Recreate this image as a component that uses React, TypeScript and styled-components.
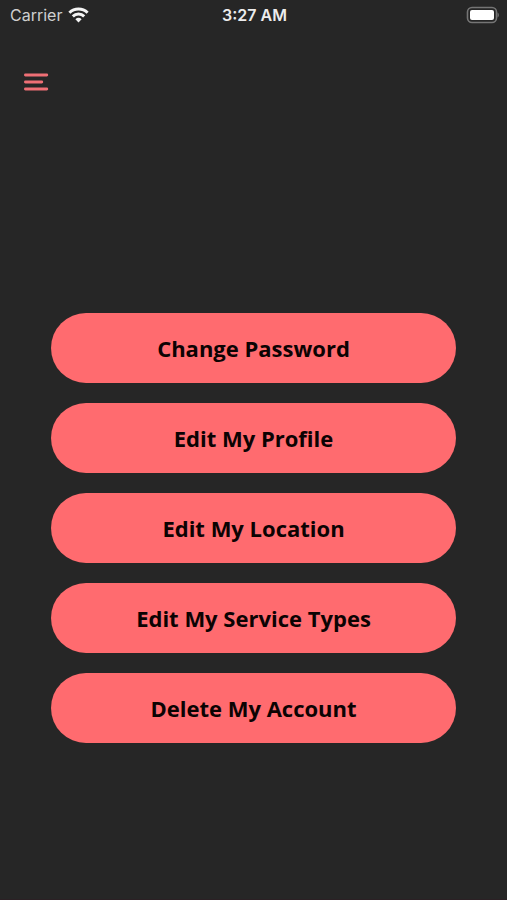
import React from "react";
import styled, { createGlobalStyle } from "styled-components";

const GlobalStyle = createGlobalStyle`
  *, *::before, *::after { box-sizing: border-box; }
  body { margin: 0; background: #262626; }
`;

const Screen = styled.div`
  display: flex;
  flex-direction: column;
  min-height: 100vh;
  background: #262626;
  border-bottom: 1px solid #2b2024;
  font-family: "Open Sans", sans-serif;
`;

const StatusBar = styled.div`
  display: grid;
  grid-template-columns: 1fr auto 1fr;
  align-items: center;
  height: 30px;
  padding: 0 8px 0 10px;
  font-family: Inter, sans-serif;
  font-size: 16px;
  line-height: 20px;
`;

const Carrier = styled.div`
  display: flex;
  align-items: center;
  gap: 6px;
  color: #cfcfcf;
`;

const Clock = styled.time`
  color: #ececec;
  font-weight: 600;
`;

const BatteryIcon = styled.svg`
  display: block;
  justify-self: end;
`;

const Header = styled.header`
  height: 127px;
  padding: 36px 16px 0;
`;

const MenuButton = styled.button`
  display: grid;
  place-items: center;
  width: 40px;
  height: 32px;
  padding: 0;
  border: 0;
  background: transparent;
  cursor: pointer;
`;

const Actions = styled.main`
  flex: 1;
  display: flex;
  flex-direction: column;
  align-items: center;
  justify-content: center;
  gap: 20px;
`;

const ActionButton = styled.button`
  width: 80%;
  height: 70px;
  padding: 0 16px;
  border: 0;
  border-radius: 35px;
  background: #ff6b6f;
  color: #0c0303;
  font-family: inherit;
  font-size: 22px;
  font-weight: 700;
  line-height: 30px;
  cursor: pointer;
`;

const actions = [
  "Change Password",
  "Edit My Profile",
  "Edit My Location",
  "Edit My Service Types",
  "Delete My Account",
];

export default function App() {
  return (
    <>
      <GlobalStyle />
      <Screen>
        <StatusBar>
          <Carrier>
            <span>Carrier</span>
            <svg width="21" height="16" viewBox="0 0 21 16" fill="none" stroke="#f4f4f4" strokeWidth="3" aria-label="Wi-Fi">
              <path d="M1.4 5.7a13 13 0 0 1 18.2 0" />
              <path d="M4.8 9.4a8.2 8.2 0 0 1 11.4 0" />
              <path d="M10.5 15.4 7.4 12.2a4.5 4.5 0 0 1 6.2 0z" fill="#f4f4f4" stroke="none" />
            </svg>
          </Carrier>
          <Clock>3:27 AM</Clock>
          <BatteryIcon width="33" height="18" viewBox="0 0 33 18" aria-label="Battery full">
            <rect x="1.5" y="1.5" width="29" height="15" rx="4.5" fill="none" stroke="#757575" strokeWidth="1.6" />
            <rect x="4" y="4" width="24" height="10" rx="2" fill="#fff" />
            <path d="M31.6 6.5c1.5.7 1.5 4.3 0 5z" fill="#858585" />
          </BatteryIcon>
        </StatusBar>
        <Header>
          <MenuButton aria-label="Menu">
            <svg width="26" height="18" viewBox="0 0 26 18" stroke="#ee6f75" strokeWidth="2.8" strokeLinecap="round">
              <path d="M2.4 2h21.4M2.4 9h16.4M2.4 16h21.4" />
            </svg>
          </MenuButton>
        </Header>
        <Actions>
          {actions.map((label) => (
            <ActionButton key={label}>{label}</ActionButton>
          ))}
        </Actions>
      </Screen>
    </>
  );
}
